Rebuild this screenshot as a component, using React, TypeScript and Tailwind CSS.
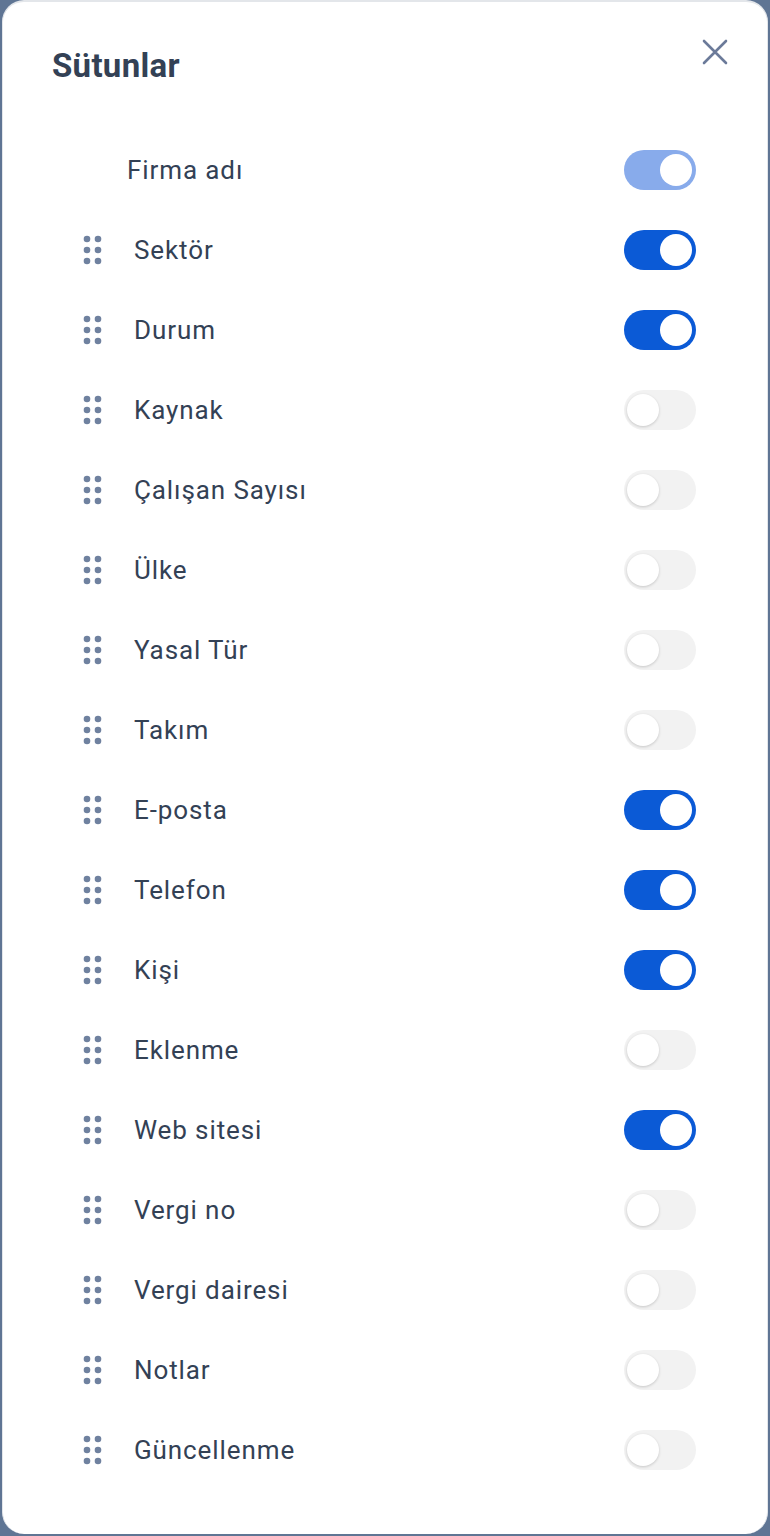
import React from "react";

type Column = { label: string; on: boolean };

const columns: Column[] = [
  { label: "Sektör", on: true },
  { label: "Durum", on: true },
  { label: "Kaynak", on: false },
  { label: "Çalışan Sayısı", on: false },
  { label: "Ülke", on: false },
  { label: "Yasal Tür", on: false },
  { label: "Takım", on: false },
  { label: "E-posta", on: true },
  { label: "Telefon", on: true },
  { label: "Kişi", on: true },
  { label: "Eklenme", on: false },
  { label: "Web sitesi", on: true },
  { label: "Vergi no", on: false },
  { label: "Vergi dairesi", on: false },
  { label: "Notlar", on: false },
  { label: "Güncellenme", on: false },
];

function Handle() {
  return (
    <svg width="22" height="30" viewBox="0 0 22 30" className="shrink-0">
      {[4, 15, 26].map((cy) => (
        <g key={cy} fill="#6f819f">
          <circle cx="5" cy={cy} r="3.3" />
          <circle cx="16" cy={cy} r="3.3" />
        </g>
      ))}
    </svg>
  );
}

function Toggle({ on, disabled }: { on: boolean; disabled?: boolean }) {
  const track = disabled
    ? "bg-[#88abeb]"
    : on
      ? "bg-[#0b5ad6]"
      : "bg-[#f2f2f2]";
  return (
    <div className={`relative w-[72px] h-[40px] rounded-full shrink-0 ${track}`}>
      <div
        className={`absolute top-[4px] w-[32px] h-[32px] rounded-full bg-white ${
          on ? "left-[36px]" : "left-[3px] shadow-[0_1px_3px_rgba(0,0,0,0.18)]"
        }`}
      />
    </div>
  );
}

export default function App() {
  return (
    <div
      className="w-[770px] h-[1536px] bg-[#5f7594] px-[2px] pb-[2px]"
      style={{ fontFamily: "Roboto, 'Noto Sans', sans-serif" }}
    >
      <div className="h-full bg-white rounded-[22px] border-t-2 border-x border-[#e3e6ea] flex flex-col">
        <div className="flex justify-between items-start pl-[49px] pr-[38px] pt-[44px] h-[128px]">
          <h1 className="text-[33px] leading-[40px] font-bold text-[#334155] tracking-[0.3px]">
            Sütunlar
          </h1>
          <svg width="28" height="28" viewBox="0 0 28 28" className="-mt-[8px]">
            <path
              d="M3 3 L25 25 M25 3 L3 25"
              stroke="#6b7a99"
              strokeWidth="2.6"
              strokeLinecap="round"
            />
          </svg>
        </div>
        <div className="flex flex-col pl-[79px] pr-[71px]">
          <div className="h-[80px] flex items-center">
            <span className="pl-[45px] flex-1 text-[26px] text-[#334155] tracking-[0.9px]">
              Firma adı
            </span>
            <Toggle on disabled />
          </div>
          {columns.map((c) => (
            <div key={c.label} className="h-[80px] flex items-center">
              <Handle />
              <span className="pl-[30px] flex-1 text-[26px] text-[#334155] tracking-[0.9px]">
                {c.label}
              </span>
              <Toggle on={c.on} />
            </div>
          ))}
        </div>
      </div>
    </div>
  );
}
